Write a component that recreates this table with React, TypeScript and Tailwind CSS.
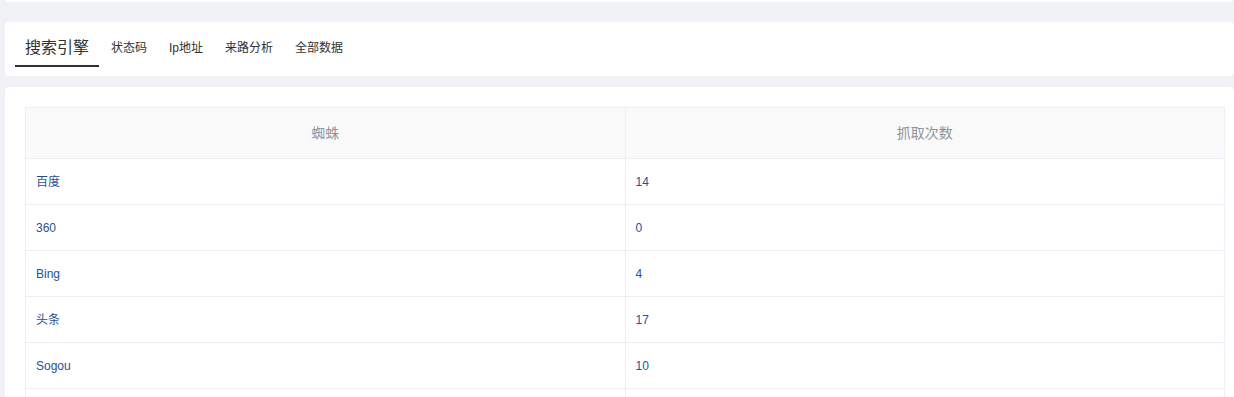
const tabs = ["状态码", "Ip地址", "来路分析", "全部数据"];

const rows: [string, number][] = [
  ["百度", 14],
  ["360", 0],
  ["Bing", 4],
  ["头条", 17],
  ["Sogou", 10],
];

export default function App() {
  return (
    <div
      className="h-[397px] overflow-hidden bg-[#f0f2f5] pl-[5px]"
      style={{ fontFamily: '"Liberation Sans", "Noto Sans CJK SC", sans-serif' }}
    >
      <div className="-mt-2 h-[10px] rounded-b bg-white" />

      <div className="mt-5 flex h-[54px] items-center rounded bg-white px-[10px]">
        <div className="flex h-full items-end">
          <div className="flex h-[45px] flex-col justify-between">
            <span className="px-[10px] pt-[5px] text-[16px] leading-[24px] text-[#303133]">搜索引擎</span>
            <span className="mb-[9px] h-[2px] w-full bg-[#303133]" />
          </div>
          {tabs.map((t) => (
            <span
              key={t}
              className="mb-[19px] ml-[2px] px-[10px] text-[12px] leading-[18px] text-[#303133]"
            >
              {t}
            </span>
          ))}
        </div>
      </div>

      <div className="mt-[11px] rounded-t bg-white pl-5 pr-[9px] pt-5">
        <table className="w-full table-fixed border-collapse text-[12px]">
          <thead>
            <tr className="h-[51px] bg-[#fafafa] text-[14px] text-[#909399]">
              <th className="border border-[#ebeef5] font-normal">蜘蛛</th>
              <th className="border border-[#ebeef5] font-normal">抓取次数</th>
            </tr>
          </thead>
          <tbody className="text-[#1f5296]">
            {rows.map(([name, n]) => (
              <tr key={name} className="h-[46px]">
                <td className="border border-[#ebeef5] pl-[10px]">{name}</td>
                <td className="border border-[#ebeef5] pl-[10px]">{n}</td>
              </tr>
            ))}
            <tr className="h-[46px]">
              <td className="border border-[#ebeef5]" />
              <td className="border border-[#ebeef5]" />
            </tr>
          </tbody>
        </table>
      </div>
    </div>
  );
}
